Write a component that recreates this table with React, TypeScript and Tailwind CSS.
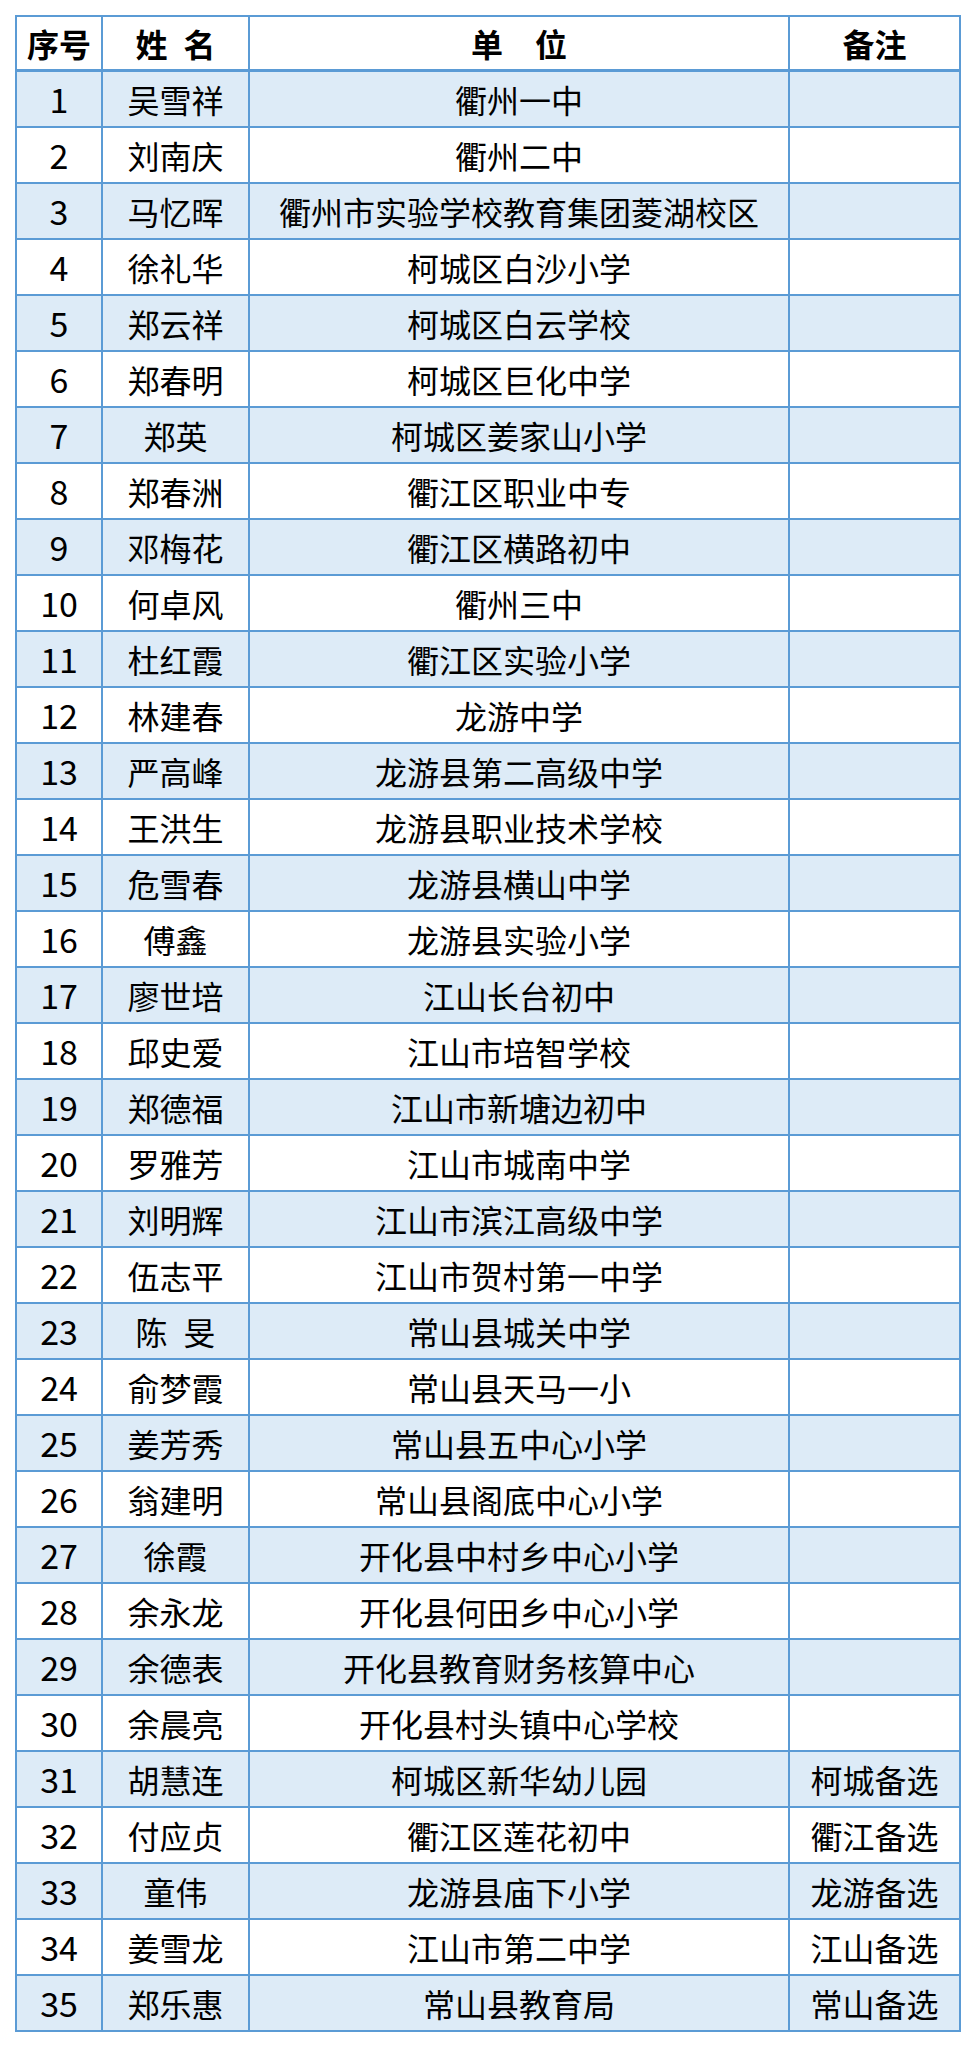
const rows: [string, string, string][] = [
  ["吴雪祥", "衢州一中", ""],
  ["刘南庆", "衢州二中", ""],
  ["马忆晖", "衢州市实验学校教育集团菱湖校区", ""],
  ["徐礼华", "柯城区白沙小学", ""],
  ["郑云祥", "柯城区白云学校", ""],
  ["郑春明", "柯城区巨化中学", ""],
  ["郑英", "柯城区姜家山小学", ""],
  ["郑春洲", "衢江区职业中专", ""],
  ["邓梅花", "衢江区横路初中", ""],
  ["何卓风", "衢州三中", ""],
  ["杜红霞", "衢江区实验小学", ""],
  ["林建春", "龙游中学", ""],
  ["严高峰", "龙游县第二高级中学", ""],
  ["王洪生", "龙游县职业技术学校", ""],
  ["危雪春", "龙游县横山中学", ""],
  ["傅鑫", "龙游县实验小学", ""],
  ["廖世培", "江山长台初中", ""],
  ["邱史爱", "江山市培智学校", ""],
  ["郑德福", "江山市新塘边初中", ""],
  ["罗雅芳", "江山市城南中学", ""],
  ["刘明辉", "江山市滨江高级中学", ""],
  ["伍志平", "江山市贺村第一中学", ""],
  ["陈\u2002旻", "常山县城关中学", ""],
  ["俞梦霞", "常山县天马一小", ""],
  ["姜芳秀", "常山县五中心小学", ""],
  ["翁建明", "常山县阁底中心小学", ""],
  ["徐霞", "开化县中村乡中心小学", ""],
  ["余永龙", "开化县何田乡中心小学", ""],
  ["余德表", "开化县教育财务核算中心", ""],
  ["余晨亮", "开化县村头镇中心学校", ""],
  ["胡慧连", "柯城区新华幼儿园", "柯城备选"],
  ["付应贞", "衢江区莲花初中", "衢江备选"],
  ["童伟", "龙游县庙下小学", "龙游备选"],
  ["姜雪龙", "江山市第二中学", "江山备选"],
  ["郑乐惠", "常山县教育局", "常山备选"],
];

const cols = "grid grid-cols-[86px_147px_540px_169px]";
const cell = "flex items-center justify-center border-r-2 border-[#5b9bd5]";

export default function App() {
  return (
    <div className="min-h-[2048px] w-[976px] bg-white pt-[15px] pl-[15px] font-['Noto_Sans_CJK_SC','Noto_Sans',sans-serif] text-[32px] leading-none text-black">
      <div className="w-[946px] border-2 border-[#5b9bd5]">
        <div className={`${cols} h-[55px] border-b-[3px] border-[#5b9bd5] font-bold`}>
          <div className={cell}>序号</div>
          <div className={cell}>姓{"\u2002"}名</div>
          <div className={cell}>单{"\u3000"}位</div>
          <div className="flex items-center justify-center">备注</div>
        </div>
        {rows.map(([name, unit, note], i) => {
          const last = i === rows.length - 1;
          return (
            <div
              key={i}
              className={`${cols} ${last ? "h-[54px]" : "h-[56px] border-b-2 border-[#5b9bd5]"} ${
                i % 2 === 0 ? "bg-[#ddebf7]" : "bg-white"
              }`}
            >
              <div className={`${cell} text-[34px]`}>{i + 1}</div>
              <div className={cell}>{name}</div>
              <div className={cell}>{unit}</div>
              <div className="flex items-center justify-center">{note}</div>
            </div>
          );
        })}
      </div>
    </div>
  );
}
